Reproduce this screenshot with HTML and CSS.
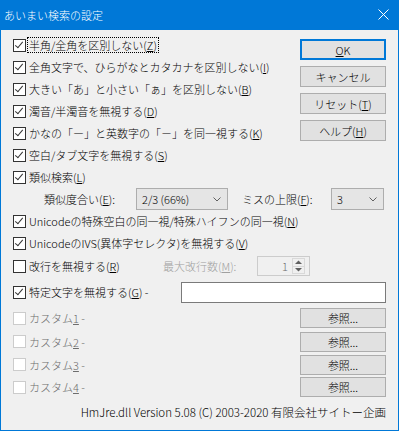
FILE: index.html
```html
<!DOCTYPE html>
<html lang="ja">
<head>
<meta charset="utf-8">
<title>あいまい検索の設定</title>
<link rel="stylesheet" href="styles.css">
</head>
<body>
<div class="window">
  <div class="titlebar">
    <span class="title">あいまい検索の設定</span>
    <svg class="close" width="11" height="11" viewBox="0 0 11 11"><path d="M0.5 0.5L10.5 10.5M10.5 0.5L0.5 10.5" stroke="#fff" stroke-width="1" fill="none"/></svg>
  </div>
  <div class="content">
    <div class="top">
      <div class="opts">
        <div class="row"><span class="cb on"></span><span class="lbl focus">半角/全角を区別しない(<u>Z</u>)</span></div>
        <div class="row"><span class="cb on"></span><span class="lbl">全角文字で、ひらがなとカタカナを区別しない(<u>I</u>)</span></div>
        <div class="row"><span class="cb on"></span><span class="lbl">大きい「あ」と小さい「ぁ」を区別しない(<u>B</u>)</span></div>
        <div class="row"><span class="cb on"></span><span class="lbl">濁音/半濁音を無視する(<u>D</u>)</span></div>
        <div class="row"><span class="cb on"></span><span class="lbl">かなの「ー」と英数字の「－」を同一視する(<u>K</u>)</span></div>
        <div class="row"><span class="cb on"></span><span class="lbl">空白/タブ文字を無視する(<u>S</u>)</span></div>
      </div>
      <div class="btns">
        <button class="btn default"><u>O</u>K</button>
        <button class="btn">キャンセル</button>
        <button class="btn">リセット(<u>T</u>)</button>
        <button class="btn">ヘルプ(<u>H</u>)</button>
      </div>
    </div>
    <div class="row"><span class="cb on"></span><span class="lbl">類似検索(<u>L</u>)</span></div>
    <div class="row sub">
      <span class="flbl w1">類似度合い(<u>E</u>):</span>
      <div class="combo c1"><span>2/3 (66%)</span><svg width="8" height="5" viewBox="0 0 8 5"><path d="M0.5 0.5L4 4L7.5 0.5" stroke="#606060" fill="none"/></svg></div>
      <span class="flbl w2">ミスの上限(<u>F</u>):</span>
      <div class="combo c2"><span>3</span><svg width="8" height="5" viewBox="0 0 8 5"><path d="M0.5 0.5L4 4L7.5 0.5" stroke="#606060" fill="none"/></svg></div>
    </div>
    <div class="row"><span class="cb on"></span><span class="lbl">Unicodeの特殊空白の同一視/特殊ハイフンの同一視(<u>N</u>)</span></div>
    <div class="row"><span class="cb on"></span><span class="lbl">UnicodeのIVS(異体字セレクタ)を無視する(<u>V</u>)</span></div>
    <div class="row r-nl">
      <div class="cbwrap w150"><span class="cb"></span><span class="lbl">改行を無視する(<u>R</u>)</span></div>
      <span class="flbl dim w94">最大改行数(<u>M</u>):</span>
      <div class="spin">
        <span class="val">1</span>
        <div class="arrows">
          <span class="arr"><svg width="7" height="4" viewBox="0 0 7 4"><path d="M0 4L3.5 0.5L7 4Z" fill="#606060"/></svg></span>
          <span class="arr"><svg width="7" height="4" viewBox="0 0 7 4"><path d="M0 0L3.5 3.5L7 0Z" fill="#606060"/></svg></span>
        </div>
      </div>
    </div>
    <div class="row r-ign">
      <div class="cbwrap w168"><span class="cb on"></span><span class="lbl">特定文字を無視する(<u>G</u>) -</span></div>
      <div class="textbox"></div>
    </div>
    <div class="row custom h24"><div class="cbwrap"><span class="cb dis"></span><span class="lbl gray">カスタム<u>1</u> -</span></div><button class="btn ref">参照...</button></div>
    <div class="row custom h235"><div class="cbwrap"><span class="cb dis"></span><span class="lbl gray">カスタム<u>2</u> -</span></div><button class="btn ref">参照...</button></div>
    <div class="row custom h22"><div class="cbwrap"><span class="cb dis"></span><span class="lbl gray">カスタム<u>3</u> -</span></div><button class="btn ref">参照...</button></div>
    <div class="row custom h23"><div class="cbwrap"><span class="cb dis"></span><span class="lbl gray">カスタム<u>4</u> -</span></div><button class="btn ref">参照...</button></div>
  </div>
  <div class="footer">HmJre.dll Version 5.08 (C) 2003-2020 有限会社サイトー企画</div>
</div>
</body>
</html>
```
FILE: styles.css
```css
html, body {
  margin: 0;
  padding: 0;
  background: #f0f0f0;
}
body {
  font-family: "Noto Sans CJK JP", "Noto Sans", sans-serif;
  font-size: 11px;
  font-weight: 300;
  color: #000;
}
.window {
  width: 399px;
  height: 431px;
  box-sizing: border-box;
  border: 1px solid #0078d7;
  border-top: none;
  background: #f0f0f0;
  display: flex;
  flex-direction: column;
}
.titlebar {
  height: 30px;
  flex: none;
  background: #0078d7;
  color: #fff;
  display: flex;
  align-items: center;
  justify-content: space-between;
  padding: 0 10px 0 4px;
  margin: 0 -1px;
}
.title {
  font-size: 11px;
  line-height: 14px;
}
.close {
  display: block;
  margin-top: -2px;
}
.content {
  padding: 4px 12px 0 12px;
}
.top {
  display: flex;
  justify-content: space-between;
}
.btns {
  display: flex;
  flex-direction: column;
  gap: 6px;
  padding-top: 5px;
}
.btn {
  width: 86px;
  height: 21px;
  box-sizing: border-box;
  background: #e1e1e1;
  border: 1px solid #adadad;
  border-radius: 0;
  font-family: inherit;
  font-size: 11px;
  font-weight: 300;
  color: #000;
  padding: 0;
  line-height: 14px;
}
.btn.default {
  border: 2px solid #0078d7;
}
.btn.ref {
  height: 20px;
}
.row {
  height: 22px;
  display: flex;
  align-items: center;
}
.cbwrap {
  display: flex;
  align-items: center;
  flex: none;
}
.w150 { width: 150px; }
.w168 { width: 168px; }
.cb {
  position: relative;
  width: 13px;
  height: 13px;
  box-sizing: border-box;
  border: 1px solid #333;
  background: #fff;
  flex: none;
  margin-right: 3px;
}
.cb.on::after {
  content: "";
  position: absolute;
  left: 3px;
  top: 0px;
  width: 3px;
  height: 7px;
  border-right: 1px solid #333;
  border-bottom: 1px solid #333;
  transform: rotate(40deg);
}
.cb.dis {
  border-color: #cccccc;
}
.lbl {
  line-height: 14px;
  white-space: nowrap;
}
.lbl.focus {
  outline: 1px dotted #000;
  padding: 0 1px;
  margin-left: -1px;
}
.gray {
  color: #6d6d6d;
}
.sub {
  padding-left: 31px;
}
.flbl {
  flex: none;
  white-space: nowrap;
  line-height: 14px;
}
.w1 { width: 92px; }
.w2 { width: 89px; margin-left: 14px; }
.w94 { width: 94px; }
.dim { color: #a0a0a0; }
.combo {
  height: 22px;
  box-sizing: border-box;
  border: 1px solid #adadad;
  background: #e5e5e5;
  display: flex;
  align-items: center;
  justify-content: space-between;
  padding: 0 6px 0 5px;
  flex: none;
}
.combo svg { display: block; }
.c1 { width: 92px; }
.c2 { width: 53px; }
.r-nl { height: 24px; }
.spin {
  width: 53px;
  height: 20px;
  box-sizing: border-box;
  border: 1px solid #cccccc;
  background: #f0f0f0;
  display: flex;
  align-items: center;
  padding: 0 4px 0 0;
}
.spin .val {
  flex: 1;
  text-align: right;
  color: #6d6d6d;
  padding-right: 4px;
}
.arrows {
  width: 13px;
  height: 16px;
  box-sizing: border-box;
  border: 1px solid #d9d9d9;
  display: flex;
  flex-direction: column;
}
.arr {
  flex: 1;
  display: flex;
  align-items: center;
  justify-content: center;
}
.arr + .arr {
  border-top: 1px solid #d9d9d9;
}
.arr svg { display: block; }
.r-ign { height: 28px; }
.textbox {
  width: 205px;
  height: 21px;
  box-sizing: border-box;
  border: 1px solid #7a7a7a;
  background: #fff;
}
.custom {
  justify-content: space-between;
}
.h24 { height: 24px; }
.h235 { height: 23.5px; }
.h22 { height: 22px; }
.h23 { height: 23px; }
.footer {
  text-align: right;
  padding: 6px 12px 0 0;
  line-height: 14px;
  white-space: nowrap;
  font-size: 11.5px;
}
```
